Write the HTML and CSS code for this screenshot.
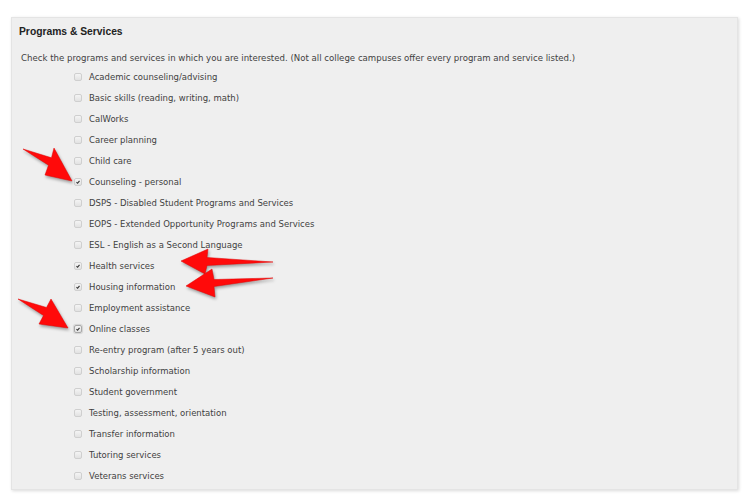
FILE: index.html
```html
<!DOCTYPE html>
<html lang="en">
<head>
  <meta charset="UTF-8">
  <meta name="viewport" content="width=device-width, initial-scale=1.0">
  <title>Programs &amp; Services</title>
  <link rel="stylesheet" href="styles.css">
</head>
<body>
  <div class="panel">
    <h2>Programs &amp; Services</h2>
    <p class="intro">Check the programs and services in which you are interested. (Not all college campuses offer every program and service listed.)</p>

    <ul class="options">
      <li><span class="box"></span>Academic counseling/advising</li>
      <li><span class="box"></span>Basic skills (reading, writing, math)</li>
      <li><span class="box"></span>CalWorks</li>
      <li><span class="box"></span>Career planning</li>
      <li><span class="box"></span>Child care</li>
      <li><span class="box checked"><svg viewBox="0 0 8 8"><path d="M2 4.3 L3.4 5.7 L6 2.4"/></svg></span>Counseling - personal</li>
      <li><span class="box"></span>DSPS - Disabled Student Programs and Services</li>
      <li><span class="box"></span>EOPS - Extended Opportunity Programs and Services</li>
      <li><span class="box"></span>ESL - English as a Second Language</li>
      <li><span class="box checked"><svg viewBox="0 0 8 8"><path d="M2 4.3 L3.4 5.7 L6 2.4"/></svg></span>Health services</li>
      <li><span class="box checked"><svg viewBox="0 0 8 8"><path d="M2 4.3 L3.4 5.7 L6 2.4"/></svg></span>Housing information</li>
      <li><span class="box"></span>Employment assistance</li>
      <li><span class="box checked focus"><svg viewBox="0 0 8 8"><path d="M2 4.3 L3.4 5.7 L6 2.4"/></svg></span>Online classes</li>
      <li><span class="box"></span>Re-entry program (after 5 years out)</li>
      <li><span class="box"></span>Scholarship information</li>
      <li><span class="box"></span>Student government</li>
      <li><span class="box"></span>Testing, assessment, orientation</li>
      <li><span class="box"></span>Transfer information</li>
      <li><span class="box"></span>Tutoring services</li>
      <li><span class="box"></span>Veterans services</li>
    </ul>
  </div>

  <!-- annotation arrows drawn over the screenshot -->
  <svg class="arrows" width="747" height="498" viewBox="0 0 747 498">
    <polygon points="23,149 51.5,157.8 54,148 72,181 45,175 48.5,165.2"/>
    <polygon points="273,262 207,257.5 208,249 181,261 205,274 207,265.5"/>
    <polygon points="273,278 214,279.5 212,269 186,286 215,297 214,286.5"/>
    <polygon points="18,299 46.5,307.5 51,299 68,328 39,324 43.5,315.5"/>
  </svg>
</body>
</html>
```

FILE: styles.css
```css
* {
  box-sizing: border-box;
}
body {
  margin: 0;
  background: #fff;
  font-family: 'DejaVu Sans', Verdana, sans-serif;
  color: #3f3f3f;
  position: relative;
  width: 747px;
  height: 498px;
  overflow: hidden;
}
.panel {
  margin: 17px 0 0 11px;
  width: 727px;
  height: 473px;
  background: #efefef;
  border: 1px solid #e4e4e4;
  box-shadow: 1px 1px 3px rgba(0,0,0,0.15);
  padding: 7px 0 0 7px;
}
.panel h2 {
  margin: 0;
  font-family: 'Liberation Sans', Arial, sans-serif;
  font-size: 10.3px;
  font-weight: bold;
  line-height: 14px;
  color: #222;
}
.intro {
  margin: 13px 0 0 2px;
  font-size: 8.6px;
  line-height: 12px;
}
.options {
  list-style: none;
  margin: 2px 0 0 0;
  padding: 0 0 0 55px;
}
.options li {
  display: flex;
  align-items: center;
  height: 21px;
  font-size: 8.5px;
}
.box {
  width: 8px;
  height: 8px;
  margin-right: 7px;
  border: 1px solid #cfcfcf;
  border-radius: 2px;
  background: linear-gradient(#f4f4f4, #e2e2e2);
  display: flex;
}
.box svg {
  width: 6px;
  height: 6px;
}
.box path {
  fill: none;
  stroke: #333;
  stroke-width: 1.5;
}
.box.focus {
  border-color: #a8a8a8;
  box-shadow: 0 0 1px 1px rgba(0,0,0,0.12);
}
.arrows {
  position: absolute;
  left: 0;
  top: 0;
}
.arrows polygon {
  fill: #ff0a0a;
  stroke: #e00000;
  stroke-width: 0.5;
  stroke-linejoin: round;
  filter: drop-shadow(1px 2px 1.5px rgba(0,0,0,0.35));
}
```
